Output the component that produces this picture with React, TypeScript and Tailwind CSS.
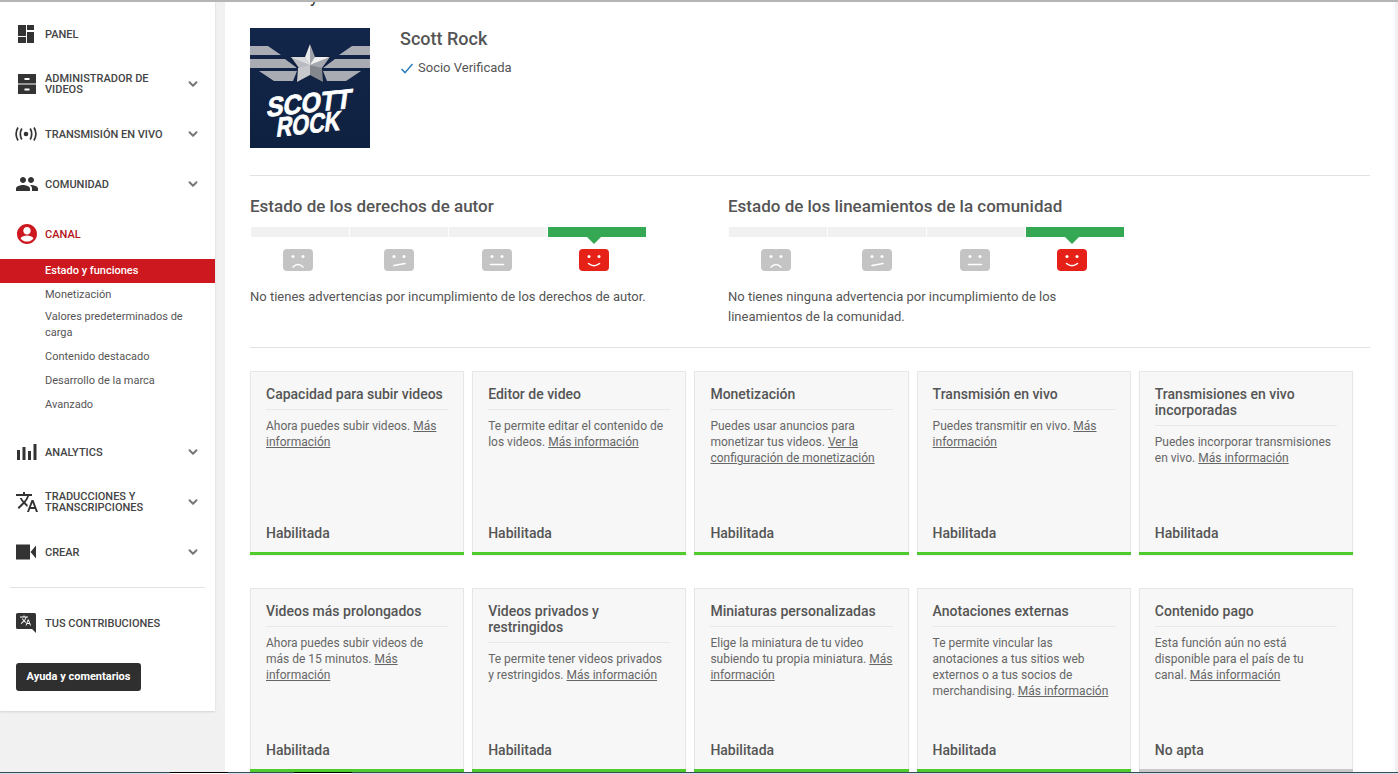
import type { ReactNode } from 'react';
import { ChevronDown } from 'lucide-react';

const translatePath =
  'M12.87 15.07l-2.54-2.51.03-.03A17.5 17.5 0 0 0 14.07 6H17V4h-7V2H8v2H1v2h11.17C11.5 7.92 10.44 9.75 9 11.35 8.07 10.32 7.3 9.19 6.69 8h-2c.73 1.63 1.73 3.17 2.98 4.56l-5.09 5.02L4 19l5-5 3.11 3.11.76-2.04zM18.5 10h-2L12 22h2l1.12-3h4.75L21 22h2l-4.5-12zm-2.62 7l1.62-4.33L19.12 17h-3.24z';

const icons: Record<string, ReactNode> = {
  panel: <path d="M3 3h8v11H3V3zm0 12h8v6H3v-6zm9-12h7v5h-7V3zm0 7h7v11h-7V10z" />,
  videos: (
    <path
      fillRule="evenodd"
      d="M3 2h18v9.500H3V2zm6.500 4v2h5V6h-5zM3 12.500h18V22H3v-9.500zm6.500 4v2h5v-2h-5z"
    />
  ),
  live: (
    <>
      <circle cx="11" cy="12" r="2.300" />
      <path
        d="M6.800 6.500q-3 5.500 0 11M15.200 6.500q3 5.500 0 11M3 5.500q-3.800 6.500 0 13M19 5.500q3.800 6.500 0 13"
        fill="none"
        stroke="#333"
        strokeWidth="1.700"
      />
    </>
  ),
  community: (
    <path d="M16 11c1.660 0 3-1.340 3-3s-1.340-3-3-3-3 1.340-3 3 1.340 3 3 3zm-8 0c1.660 0 3-1.340 3-3S9.660 5 8 5 5 6.340 5 8s1.340 3 3 3zm0 2c-2.330 0-7 1.170-7 3.500V19h14v-2.500C15 14.170 10.330 13 8 13zm8 0c-.290 0-.620.020-.970.050C16.190 13.890 17 15.020 17 16.500V19h6v-2.500c0-2.330-4.670-3.500-7-3.500z" />
  ),
  canal: (
    <path d="M12 2C6.480 2 2 6.480 2 12s4.480 10 10 10 10-4.480 10-10S17.520 2 12 2zm0 3c2.070 0 3.700 1.630 3.700 3.700S14.070 12.400 12 12.400 8.300 10.770 8.300 8.700 9.930 5 12 5zm0 14.600c-2.700 0-5.100-1.300-6.500-3.400 1.100-1.800 4.300-2.800 6.500-2.800s5.400 1 6.500 2.800c-1.400 2.100-3.800 3.400-6.500 3.400z" />
  ),
  analytics: <path d="M2 10h3v10H2V10zm5.500-3h3v13h-3V7zM13 11h3v9h-3v-9zm5.500-7h3v16h-3V4z" />,
  translate: <path d={translatePath} />,
  crear: <path d="M1 4.500h14v15H1v-15zM15.500 12 21 5.500v13L15.500 12z" />,
  contrib: (
    <>
      <path d="M2.500 2h17a1.500 1.500 0 0 1 1.500 1.500V22l-4-4H2.500A1.500 1.500 0 0 1 1 16.500v-13A1.500 1.500 0 0 1 2.500 2z" />
      <g transform="translate(4.500 3.500) scale(0.5)" fill="#fff">
        <path d={translatePath} />
      </g>
    </>
  ),
};

function NavItem({ icon, label, chevron, red }: { icon: string; label: ReactNode; chevron?: boolean; red?: boolean }) {
  return (
    <div className="flex h-[50px] items-center pl-[15px] pr-[15px]">
      <svg viewBox="0 0 24 24" className={`h-[24px] w-[24px] shrink-0 ${red ? 'fill-[#cc181e]' : 'fill-[#333]'}`}>
        {icons[icon]}
      </svg>
      <div className={`ml-[6px] flex-1 text-[11px] font-medium leading-[11px] ${red ? 'text-[#b31217]' : 'text-[#444]'}`}>
        {label}
      </div>
      {chevron && <ChevronDown size={14} strokeWidth={3.4} className="text-[#777]" />}
    </div>
  );
}

function SubItem({ children, className }: { children: ReactNode; className: string }) {
  return <div className={`pl-[45px] pr-[20px] text-[11px] leading-[16px] text-[#555] ${className}`}>{children}</div>;
}

function Sidebar() {
  return (
    <aside className="h-[711px] w-[215px] shrink-0 bg-white pt-[9px] shadow-[0_1px_2px_rgba(0,0,0,0.12)]">
      <NavItem icon="panel" label="PANEL" />
      <NavItem icon="videos" label={<>ADMINISTRADOR DE<br />VIDEOS</>} chevron />
      <NavItem icon="live" label="TRANSMISIÓN EN VIVO" chevron />
      <NavItem icon="community" label="COMUNIDAD" chevron />
      <NavItem icon="canal" label="CANAL" red />
      <div className="flex flex-col">
        <div className="bg-[#cc181e] py-[4px] pl-[45px] text-[11px] font-medium leading-[16px] text-white">
          Estado y funciones
        </div>
        <SubItem className="pb-[2px] pt-[4px]">Monetización</SubItem>
        <SubItem className="pb-[3px] pt-[4px]">Valores predeterminados de carga</SubItem>
        <SubItem className="pb-[3px] pt-[5px]">Contenido destacado</SubItem>
        <SubItem className="pb-[3px] pt-[5px]">Desarrollo de la marca</SubItem>
        <SubItem className="pb-[3px] pt-[5px]">Avanzado</SubItem>
      </div>
      <div className="mt-[11px]">
        <NavItem icon="analytics" label="ANALYTICS" chevron />
        <NavItem icon="translate" label={<>TRADUCCIONES Y<br />TRANSCRIPCIONES</>} chevron />
        <NavItem icon="crear" label="CREAR" chevron />
      </div>
      <div className="mx-[10px] mt-[10px] border-t border-[#e2e2e2]" />
      <div className="mt-[10px]">
        <NavItem icon="contrib" label="TUS CONTRIBUCIONES" />
      </div>
      <button className="ml-[16px] mt-[15px] h-[28px] w-[125px] rounded-[3px] bg-[#2f2f2f] pt-[1px] text-[11px] font-bold text-white">
        Ayuda y comentarios
      </button>
    </aside>
  );
}

function Logo() {
  return (
    <svg viewBox="0 0 120 120" className="h-[120px] w-[120px] shrink-0">
      <defs>
        <linearGradient id="logoBg" x1="0" y1="0" x2="0" y2="1">
          <stop offset="0" stopColor="#12264a" />
          <stop offset="1" stopColor="#0f2140" />
        </linearGradient>
      </defs>
      <rect width="120" height="120" fill="url(#logoBg)" />
      <g fill="#a9acb2">
        <path d="M0 18h18l13 9H0zM0 31h35l12 9H0zM9 43h38l-4 10H24z" />
        <path d="M120 18h-18l-13 9h31zM120 31H85l-12 9h47zM111 43H73l4 10h19z" />
      </g>
      <path d="M60 16 65 29 80 29 72 40 73 54 60 47 47 54 48 40 40 29 55 29z" fill="#b9bbc0" stroke="#0e1d3a" strokeWidth="1.500" />
      <path d="M60 16 65 29 60 37z" fill="#9fa2a8" />
      <path d="M60 16 55 29 60 37z" fill="#e8e9eb" />
      <path d="M40 29H55L60 37z" fill="#d9dadd" />
      <path d="M80 29H65L60 37z" fill="#f0f0f2" />
      <path d="M80 29 72 40 60 37z" fill="#a5a8ae" />
      <path d="M73 54 72 40 60 37 60 47z" fill="#84878e" />
      <path d="M47 54 48 40 60 37 60 47z" fill="#c6c8cc" />
      <g fill="#fff" stroke="#fff" strokeWidth="0.800" fontFamily="'Liberation Sans', sans-serif" fontWeight="700">
        <text x="17" y="84" fontSize="27" textLength="85" lengthAdjust="spacingAndGlyphs" transform="translate(60 75) rotate(-6) skewX(-14) translate(-60 -75)">
          SCOTT
        </text>
        <text x="27" y="105" fontSize="27" textLength="64" lengthAdjust="spacingAndGlyphs" transform="translate(60 95) rotate(-6) skewX(-14) translate(-60 -95)">
          ROCK
        </text>
      </g>
    </svg>
  );
}

const faces = [
  { kind: 'sad', mouth: 'M10 18q5-5 10 0', shift: '-translate-x-[2px]' },
  { kind: 'meh', mouth: 'M10 16.500 21 14.500', shift: '' },
  { kind: 'flat', mouth: 'M8.500 15.500h13', shift: '-translate-x-[1px]' },
  { kind: 'smile', mouth: 'M9.500 14.500q5.500 4.500 11 0', shift: '-translate-x-[3px]' },
];

function Face({ mouth, on }: { mouth: string; on?: boolean }) {
  return (
    <svg viewBox="0 0 30 22" className="h-[22px] w-[30px]">
      <rect width="30" height="22" rx="4" fill={on ? '#e62117' : '#c4c4c4'} />
      <circle cx="10" cy="7.500" r="1.500" fill="#fff" />
      <circle cx="20" cy="7.500" r="1.500" fill="#fff" />
      <path d={mouth} fill="none" stroke="#fff" strokeWidth="1.600" strokeLinecap="round" />
    </svg>
  );
}

function StatusMeter({ title, text }: { title: string; text: ReactNode }) {
  return (
    <div className="w-[396px]">
      <h2 className="text-[17px] font-medium leading-[20px] text-[#555]">{title}</h2>
      <div className="ml-[1px] mt-[11px] grid w-[395px] grid-cols-4 gap-[1px]">
        {faces.map((f, i) => (
          <div key={f.kind} className="relative flex flex-col items-center">
            <div className={`h-[10px] w-full ${i === 3 ? 'bg-[#34a853]' : 'bg-[#f1f1f1]'}`} />
            {i === 3 && (
              <div className="absolute left-1/2 top-[10px] -ml-[10px] h-0 w-0 border-x-[7px] border-t-[7px] border-x-transparent border-t-[#34a853]" />
            )}
            <div className={`mt-[12px] ${f.shift}`}>
              <Face mouth={f.mouth} on={i === 3} />
            </div>
          </div>
        ))}
      </div>
      <p className="mt-[16px] text-[13px] leading-[20px] text-[#555]">{text}</p>
    </div>
  );
}

type CardData = { title: string; body: string; link: string; status?: string };

const cards: CardData[] = [
  { title: 'Capacidad para subir videos', body: 'Ahora puedes subir videos. ', link: 'Más información' },
  { title: 'Editor de video', body: 'Te permite editar el contenido de los videos. ', link: 'Más información' },
  { title: 'Monetización', body: 'Puedes usar anuncios para monetizar tus videos. ', link: 'Ver la configuración de monetización' },
  { title: 'Transmisión en vivo', body: 'Puedes transmitir en vivo. ', link: 'Más información' },
  { title: 'Transmisiones en vivo incorporadas', body: 'Puedes incorporar transmisiones en vivo. ', link: 'Más información' },
  { title: 'Videos más prolongados', body: 'Ahora puedes subir videos de más de 15 minutos. ', link: 'Más información' },
  { title: 'Videos privados y restringidos', body: 'Te permite tener videos privados y restringidos. ', link: 'Más información' },
  { title: 'Miniaturas personalizadas', body: 'Elige la miniatura de tu video subiendo tu propia miniatura. ', link: 'Más información' },
  { title: 'Anotaciones externas', body: 'Te permite vincular las anotaciones a tus sitios web externos o a tus socios de merchandising. ', link: 'Más información' },
  { title: 'Contenido pago', body: 'Esta función aún no está disponible para el país de tu canal. ', link: 'Más información', status: 'No apta' },
];

function FeatureCard({ card }: { card: CardData }) {
  const off = card.status === 'No apta';
  return (
    <div className="flex h-[184px] flex-col border border-b-0 border-[#e6e6e6] bg-[#f7f7f7] shadow-[0_1px_1px_rgba(0,0,0,0.05)]">
      <div className="mx-[15px] mt-[14px] border-b border-[#e8e8e8] pb-[7px] text-[14px] font-medium leading-[16px] text-[#555]">
        {card.title}
      </div>
      <p className="mx-[15px] mt-[8px] text-[12px] leading-[16px] text-[#666]">
        {card.body}
        <span className="underline">{card.link}</span>
      </p>
      <div className="mx-[15px] mb-[11px] mt-auto text-[14px] font-medium leading-[16px] text-[#555]">
        {card.status ?? 'Habilitada'}
      </div>
      <div className={`-mx-px h-[3px] shrink-0 ${off ? 'bg-[#c8c8c8]' : 'bg-[#4fcb2c]'}`} />
    </div>
  );
}

function Main() {
  return (
    <main className="ml-[10px] h-full w-[1170px] shrink-0 overflow-hidden bg-white px-[25px]">
      <h1 className="-mt-[16px] h-[44px] text-[18px] leading-[24px] text-[#333]">Estado y funciones</h1>
      <section className="flex border-b border-[#e2e2e2] pb-[27px]">
        <Logo />
        <div className="ml-[30px]">
          <div className="text-[18px] font-medium leading-[22px] text-[#555]">Scott Rock</div>
          <div className="mt-[10px] flex items-center gap-[4px] text-[13px] leading-[16px] text-[#555]">
            <svg viewBox="0 0 14 12" className="h-[11px] w-[14px]">
              <path d="M1 6.500 4.800 10.500 13 1" fill="none" stroke="#2b7cb8" strokeWidth="1.600" />
            </svg>
            Socio Verificada
          </div>
        </div>
      </section>
      <section className="flex gap-[82px] border-b border-[#e2e2e2] pb-[20px] pt-[20px]">
        <StatusMeter title="Estado de los derechos de autor" text="No tienes advertencias por incumplimiento de los derechos de autor." />
        <StatusMeter title="Estado de los lineamientos de la comunidad" text="No tienes ninguna advertencia por incumplimiento de los lineamientos de la comunidad." />
      </section>
      <div className="mt-[23px] grid w-[1103px] grid-cols-5 gap-x-[8px] gap-y-[33px]">
        {cards.map((card) => (
          <FeatureCard key={card.title} card={card} />
        ))}
      </div>
    </main>
  );
}

export default function App() {
  return (
    <div className="relative flex h-[774px] w-[1398px] overflow-hidden bg-[#f1f1f1] font-['Roboto',sans-serif]">
      <div className="absolute inset-x-0 top-0 z-10 h-[2px] bg-[#b5b5b5]" />
      <Sidebar />
      <Main />
      <div className="absolute inset-x-0 bottom-0 z-10 h-[2px] border-t border-[#3b4a5a] bg-[#d5dde5]">
        <div className="absolute -top-px left-[170px] h-[2px] w-[58px] border-t border-black bg-white" />
        <div className="absolute -top-px left-[294px] h-[2px] w-[58px] border-t border-black bg-white" />
      </div>
    </div>
  );
}
